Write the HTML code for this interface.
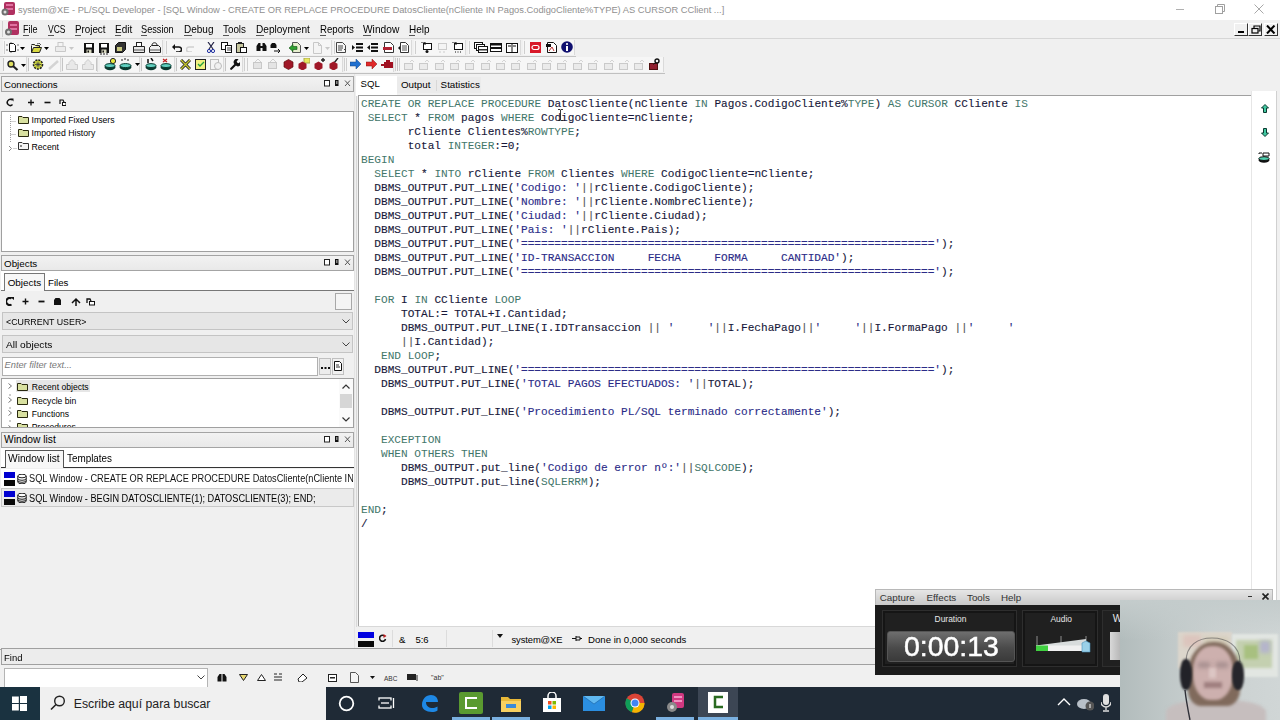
<!DOCTYPE html>
<html><head><meta charset="utf-8">
<style>
*{margin:0;padding:0;box-sizing:border-box}
html,body{width:1280px;height:720px;overflow:hidden;background:#f0f0f0;font-family:"Liberation Sans",sans-serif;font-size:10px;color:#000;position:relative}
.a{position:absolute}
.t{position:absolute;white-space:pre;line-height:1}
.code{position:absolute;left:361px;top:97px;font-family:"Liberation Mono",monospace;font-size:11.111px;line-height:14px;white-space:pre;color:#18183a;-webkit-text-stroke:0.12px}
.k{color:#42766a;-webkit-text-stroke:0}
.s{color:#2c2c88}
.o{color:#555}
</style></head><body>

<div class="a" style="left:0px;top:0px;width:1280px;height:20px;background:#fff"></div>
<svg class="a" style="left:1px;top:2px;" width="15" height="14" viewBox="0 0 15 14"><rect x="3" y="0" width="11" height="13" rx="2" fill="#b03060"/><rect x="5" y="2" width="7" height="2" fill="#e070a0"/><rect x="5" y="6" width="7" height="2" fill="#e070a0"/><circle cx="4" cy="10" r="3.5" fill="#707070"/><circle cx="4" cy="10" r="1.5" fill="#ddd"/></svg>
<div class="t" style="left:18px;top:5.71px;font-size:9.323px;color:#909090;font-family:'Liberation Sans';">system@XE - PL/SQL Developer - [SQL Window - CREATE OR REPLACE PROCEDURE DatosCliente(nCliente IN Pagos.CodigoCliente%TYPE) AS CURSOR CClient ...]</div>
<div class="a" style="left:1176px;top:9px;width:8px;height:1px;background:#b0b0b0"></div>
<svg class="a" style="left:1214px;top:4px;" width="11" height="11" viewBox="0 0 11 11"><rect x="1.5" y="2.5" width="7" height="7" fill="none" stroke="#a0a0a0"/><path d="M3.5 2.5V0.5h7v7h-2" fill="none" stroke="#a0a0a0"/></svg>
<svg class="a" style="left:1254px;top:4px;" width="10" height="10" viewBox="0 0 10 10"><path d="M0.5 0.5L9.5 9.5M9.5 0.5L0.5 9.5" stroke="#a8a8a8" stroke-width="1"/></svg>
<div class="a" style="left:0px;top:20px;width:1280px;height:18px;background:#f0f0f0"></div>
<div class="a" style="left:0px;top:38px;width:1280px;height:1px;background:#d6d6d6"></div>
<div class="a" style="left:2px;top:21px;width:1px;height:16px;background:#d0d0d0"></div>
<svg class="a" style="left:4px;top:21px;" width="15" height="15" viewBox="0 0 15 15"><rect x="4" y="0" width="11" height="14" rx="2" fill="#b03060"/><rect x="6" y="3" width="7" height="2" fill="#e070a0"/><rect x="6" y="7" width="7" height="2" fill="#e070a0"/><circle cx="4.5" cy="11" r="3.5" fill="#707070"/><circle cx="4.5" cy="11" r="1.5" fill="#ddd"/></svg>
<div class="t" style="left:23px;top:24.80px;font-size:10.400px;color:#000;font-family:'Liberation Sans';transform:scaleX(0.8712);transform-origin:0 0;">File</div>
<div class="a" style="left:23px;top:35px;width:6px;height:1px;background:#555"></div>
<div class="t" style="left:48px;top:24.80px;font-size:10.400px;color:#000;font-family:'Liberation Sans';transform:scaleX(0.8183);transform-origin:0 0;">VCS</div>
<div class="a" style="left:48px;top:35px;width:6px;height:1px;background:#555"></div>
<div class="t" style="left:75px;top:24.80px;font-size:10.400px;color:#000;font-family:'Liberation Sans';transform:scaleX(0.9423);transform-origin:0 0;">Project</div>
<div class="a" style="left:75px;top:35px;width:6px;height:1px;background:#555"></div>
<div class="t" style="left:115px;top:24.80px;font-size:10.400px;color:#000;font-family:'Liberation Sans';transform:scaleX(0.9597);transform-origin:0 0;">Edit</div>
<div class="a" style="left:115px;top:35px;width:6px;height:1px;background:#555"></div>
<div class="t" style="left:141.2px;top:24.80px;font-size:10.400px;color:#000;font-family:'Liberation Sans';transform:scaleX(0.8838);transform-origin:0 0;">Session</div>
<div class="a" style="left:141.2px;top:35px;width:6px;height:1px;background:#555"></div>
<div class="t" style="left:183.5px;top:24.80px;font-size:10.400px;color:#000;font-family:'Liberation Sans';transform:scaleX(0.9626);transform-origin:0 0;">Debug</div>
<div class="a" style="left:183.5px;top:35px;width:8px;height:1px;background:#555"></div>
<div class="t" style="left:223px;top:24.80px;font-size:10.400px;color:#000;font-family:'Liberation Sans';transform:scaleX(0.9473);transform-origin:0 0;">Tools</div>
<div class="a" style="left:223px;top:35px;width:6px;height:1px;background:#555"></div>
<div class="t" style="left:255.8px;top:24.80px;font-size:10.400px;color:#000;font-family:'Liberation Sans';transform:scaleX(0.9713);transform-origin:0 0;">Deployment</div>
<div class="a" style="left:255.8px;top:35px;width:8px;height:1px;background:#555"></div>
<div class="t" style="left:319.6px;top:24.80px;font-size:10.400px;color:#000;font-family:'Liberation Sans';transform:scaleX(0.9282);transform-origin:0 0;">Reports</div>
<div class="a" style="left:319.6px;top:35px;width:6px;height:1px;background:#555"></div>
<div class="t" style="left:362.7px;top:24.80px;font-size:10.400px;color:#000;font-family:'Liberation Sans';transform:scaleX(0.9813);transform-origin:0 0;">Window</div>
<div class="a" style="left:362.7px;top:35px;width:8px;height:1px;background:#555"></div>
<div class="t" style="left:409.1px;top:24.80px;font-size:10.400px;color:#000;font-family:'Liberation Sans';transform:scaleX(0.9584);transform-origin:0 0;">Help</div>
<div class="a" style="left:409.1px;top:35px;width:6px;height:1px;background:#555"></div>
<div class="a" style="left:1234px;top:23px;width:14px;height:13px;border-right:1px solid #333;border-bottom:1px solid #333;border-top:1px solid #fff;border-left:1px solid #fff"></div>
<div class="a" style="left:1248px;top:23px;width:14px;height:13px;border-right:1px solid #333;border-bottom:1px solid #333;border-top:1px solid #fff;border-left:1px solid #fff"></div>
<div class="a" style="left:1264px;top:23px;width:14px;height:13px;border-right:1px solid #333;border-bottom:1px solid #333;border-top:1px solid #fff;border-left:1px solid #fff"></div>
<div class="a" style="left:1238px;top:31px;width:6px;height:2px;background:#000"></div>
<svg class="a" style="left:1251px;top:25px;" width="10" height="9" viewBox="0 0 10 9"><rect x="1" y="3.5" width="6" height="4.5" fill="none" stroke="#000" stroke-width="1.2"/><path d="M3 3V1h6v5H7.5" fill="none" stroke="#000" stroke-width="1.2"/></svg>
<svg class="a" style="left:1266px;top:25px;" width="10" height="9" viewBox="0 0 10 9"><path d="M1 0.5L8.5 8.5M8.5 0.5L1 8.5" stroke="#000" stroke-width="2"/></svg>
<div class="a" style="left:0px;top:39px;width:1280px;height:17px;background:#f0f0f0"></div>
<div class="a" style="left:0px;top:56px;width:576px;height:1px;background:#c4c4c4"></div>
<div class="a" style="left:0px;top:57px;width:1280px;height:16px;background:#f0f0f0"></div>
<div class="a" style="left:0px;top:73px;width:665px;height:1px;background:#c0c0c0"></div>
<div class="a" style="left:3px;top:40px;width:160px;height:15px;background:#f6f6f6;border-right:1px solid #dadada"></div>
<div class="a" style="left:165px;top:40px;width:167px;height:15px;background:#f6f6f6;border-right:1px solid #dadada"></div>
<div class="a" style="left:333px;top:40px;width:79px;height:15px;background:#f6f6f6;border-right:1px solid #dadada"></div>
<div class="a" style="left:414px;top:40px;width:52px;height:15px;background:#f6f6f6;border-right:1px solid #dadada"></div>
<div class="a" style="left:468px;top:40px;width:53px;height:15px;background:#f6f6f6;border-right:1px solid #dadada"></div>
<div class="a" style="left:523px;top:40px;width:52px;height:15px;background:#f6f6f6;border-right:1px solid #dadada"></div>
<div class="a" style="left:3px;top:57px;width:24px;height:15px;background:#f6f6f6;border-right:1px solid #dadada"></div>
<div class="a" style="left:29px;top:57px;width:32px;height:15px;background:#f6f6f6;border-right:1px solid #dadada"></div>
<div class="a" style="left:63px;top:57px;width:35px;height:15px;background:#f6f6f6;border-right:1px solid #dadada"></div>
<div class="a" style="left:100px;top:57px;width:40px;height:15px;background:#f6f6f6;border-right:1px solid #dadada"></div>
<div class="a" style="left:142px;top:57px;width:33px;height:15px;background:#f6f6f6;border-right:1px solid #dadada"></div>
<div class="a" style="left:177px;top:57px;width:47px;height:15px;background:#f6f6f6;border-right:1px solid #dadada"></div>
<div class="a" style="left:226px;top:57px;width:17px;height:15px;background:#f6f6f6;border-right:1px solid #dadada"></div>
<div class="a" style="left:245px;top:57px;width:98px;height:15px;background:#f6f6f6;border-right:1px solid #dadada"></div>
<div class="a" style="left:345px;top:57px;width:49px;height:15px;background:#f6f6f6;border-right:1px solid #dadada"></div>
<div class="a" style="left:396px;top:57px;width:268px;height:15px;background:#f6f6f6;border-right:1px solid #dadada"></div>
<div class="a" style="left:4px;top:41px;width:1px;height:13px;background:#cfcfcf"></div>
<div class="a" style="left:166px;top:41px;width:1px;height:13px;background:#cfcfcf"></div>
<div class="a" style="left:334px;top:41px;width:1px;height:13px;background:#cfcfcf"></div>
<div class="a" style="left:415px;top:41px;width:1px;height:13px;background:#cfcfcf"></div>
<div class="a" style="left:469px;top:41px;width:1px;height:13px;background:#cfcfcf"></div>
<div class="a" style="left:524px;top:41px;width:1px;height:13px;background:#cfcfcf"></div>
<div class="a" style="left:3px;top:58px;width:1px;height:13px;background:#c4c4c4"></div>
<div class="a" style="left:28px;top:58px;width:1px;height:13px;background:#c4c4c4"></div>
<div class="a" style="left:62px;top:58px;width:1px;height:13px;background:#c4c4c4"></div>
<div class="a" style="left:96px;top:58px;width:1px;height:13px;background:#c4c4c4"></div>
<div class="a" style="left:141px;top:58px;width:1px;height:13px;background:#c4c4c4"></div>
<div class="a" style="left:176px;top:58px;width:1px;height:13px;background:#c4c4c4"></div>
<div class="a" style="left:225px;top:58px;width:1px;height:13px;background:#c4c4c4"></div>
<div class="a" style="left:397px;top:58px;width:1px;height:13px;background:#c4c4c4"></div>
<svg class="a" style="left:6px;top:42px;" width="13" height="11" viewBox="0 0 13 11"><path d="M3.5 1.5h4l2 2v6h-6z" fill="#fff" stroke="#111"/><path d="M0 3h2M0 8h2M11 3h2M11 8h2M5 0v1M5 10v1" stroke="#555" stroke-width="0.8"/></svg>
<svg class="a" style="left:20px;top:47px;" width="5" height="3" viewBox="0 0 5 3"><path d="M0 0h5L2.5 3z" fill="#000"/></svg>
<svg class="a" style="left:31px;top:43px;" width="11" height="10" viewBox="0 0 11 10"><path d="M0.5 1.5h3l1 1h4v2" fill="#c8c850" stroke="#222"/><path d="M0.5 9.5V2.5M0.5 9.5h8l2-5h-8z" fill="#d8d840" stroke="#222"/><path d="M6 1l2-1 2 2" fill="none" stroke="#333" stroke-width="0.8"/></svg>
<svg class="a" style="left:44px;top:47px;" width="5" height="3" viewBox="0 0 5 3"><path d="M0 0h5L2.5 3z" fill="#000"/></svg>
<svg class="a" style="left:55px;top:42px;" width="11" height="10" viewBox="0 0 11 10"><rect x="3" y="0.5" width="5" height="4" fill="#f4f4f4" stroke="#c8c8c8"/><path d="M0.5 9.5v-5h10v5z" fill="#ececec" stroke="#c8c8c8"/></svg>
<svg class="a" style="left:69px;top:47px;" width="5" height="3" viewBox="0 0 5 3"><path d="M0 0h5L2.5 3z" fill="#c8c8c8"/></svg>
<svg class="a" style="left:84px;top:43px;" width="10" height="10" viewBox="0 0 10 10"><rect x="0" y="0" width="10" height="10" fill="#111"/><rect x="2" y="1" width="6" height="3.5" fill="#fff"/><rect x="2.5" y="6.5" width="5" height="3.5" fill="#d8d8c0"/><rect x="3.5" y="7.5" width="1.5" height="2" fill="#111"/></svg>
<svg class="a" style="left:99px;top:43px;" width="10" height="10" viewBox="0 0 10 10"><rect x="0" y="0" width="10" height="10" fill="#111"/><rect x="2" y="1" width="6" height="3.5" fill="#fff"/><rect x="2.5" y="6.5" width="5" height="3.5" fill="#d8d8c0"/><rect x="3.5" y="7.5" width="1.5" height="2" fill="#111"/></svg>
<svg class="a" style="left:100px;top:53px;" width="9" height="2" viewBox="0 0 9 2"><path d="M0 1h2M3 1h2M6 1h2" stroke="#222"/></svg>
<svg class="a" style="left:115px;top:42px;" width="11" height="11" viewBox="0 0 11 11"><path d="M0.5 3.5l3-3h7v7l-3 3h-7z" fill="#333" stroke="#111"/><rect x="2" y="5" width="5" height="4" fill="#c8c880"/></svg>
<svg class="a" style="left:133px;top:42px;" width="12" height="11" viewBox="0 0 12 11"><rect x="3.5" y="0.5" width="5" height="4" fill="#fff" stroke="#222"/><path d="M0.5 10.5v-6h11v6z" fill="#e8e8e8" stroke="#222"/><path d="M1 8h10" stroke="#555"/></svg>
<svg class="a" style="left:149px;top:42px;" width="12" height="11" viewBox="0 0 12 11"><path d="M3 3c0-3 5-3 5 0" fill="none" stroke="#222"/><path d="M0.5 10.5v-5l2-2h7l2 2v5z" fill="#f0f0f0" stroke="#222"/><path d="M1 8h10" stroke="#555"/></svg>
<svg class="a" style="left:172px;top:44px;" width="10" height="8" viewBox="0 0 10 8"><path d="M2 3h5a2.5 2.5 0 0 1 0 5H4" fill="none" stroke="#111" stroke-width="1.5"/><path d="M0 3l3-3v6z" fill="#111"/></svg>
<svg class="a" style="left:186px;top:44px;" width="10" height="8" viewBox="0 0 10 8"><path d="M8 3H3a2.5 2.5 0 0 0 0 5h3" fill="none" stroke="#d0d0d0" stroke-width="1.5"/></svg>
<svg class="a" style="left:207px;top:42px;" width="8" height="11" viewBox="0 0 8 11"><path d="M1 0l5 7M7 0L2 7" stroke="#224" stroke-width="1.2"/><circle cx="2" cy="9" r="1.6" fill="none" stroke="#2030a0"/><circle cx="6" cy="9" r="1.6" fill="none" stroke="#2030a0"/></svg>
<svg class="a" style="left:221px;top:42px;" width="11" height="11" viewBox="0 0 11 11"><rect x="0.5" y="0.5" width="6" height="7" fill="#fff" stroke="#111"/><rect x="4.5" y="3.5" width="6" height="7" fill="#fff" stroke="#111"/><path d="M6 6h4M6 8h4" stroke="#444"/></svg>
<svg class="a" style="left:236px;top:42px;" width="11" height="11" viewBox="0 0 11 11"><rect x="0.5" y="1.5" width="7" height="9" fill="#c8c8a0" stroke="#222"/><rect x="4.5" y="5.5" width="6" height="5" fill="#fff" stroke="#111"/><rect x="2" y="0" width="4" height="2" fill="#222"/></svg>
<svg class="a" style="left:256px;top:42px;" width="11" height="10" viewBox="0 0 11 10"><path d="M0.5 9V4l2-3h2v8z M10.5 9V4l-2-3h-2v8z" fill="#111"/><rect x="4" y="4" width="3" height="2" fill="#111"/></svg>
<svg class="a" style="left:270px;top:42px;" width="12" height="11" viewBox="0 0 12 11"><path d="M0.5 6V3l1.5-2h1.5v5z M6.5 6V3L5 1H3.5v5z" fill="#111"/><path d="M4 9h6M8 7l2 2-2 2" stroke="#111" fill="none"/></svg>
<svg class="a" style="left:289px;top:42px;" width="12" height="11" viewBox="0 0 12 11"><path d="M3.5 0.5h5l3 3v7h-8z" fill="#e8f0d0" stroke="#555"/><path d="M0 6l4-3.5v2h4v3H4v2z" fill="#30a030" stroke="#105010" stroke-width="0.6"/></svg>
<svg class="a" style="left:304px;top:47px;" width="5" height="3" viewBox="0 0 5 3"><path d="M0 0h5L2.5 3z" fill="#000"/></svg>
<svg class="a" style="left:312px;top:42px;" width="11" height="12" viewBox="0 0 11 12"><path d="M1.5 0.5h5l3 3v8h-8z" fill="#f4f4f4" stroke="#c8c8c8" /><path d="M6.5 0.5v3h3" fill="none" stroke="#c8c8c8"/></svg>
<svg class="a" style="left:325px;top:47px;" width="5" height="3" viewBox="0 0 5 3"><path d="M0 0h5L2.5 3z" fill="#c8c8c8"/></svg>
<svg class="a" style="left:336px;top:42px;" width="11" height="11" viewBox="0 0 11 11"><path d="M0.5 0.5h6l3 3v7h-9z" fill="#f8f8f8" stroke="#444"/><path d="M2 4h5M2 6h5M2 8h4" stroke="#444"/><path d="M8 7l2 2-2 2" stroke="#444" fill="none"/></svg>
<svg class="a" style="left:352px;top:43px;" width="11" height="9" viewBox="0 0 11 9"><rect x="4" y="0" width="7" height="2" fill="#111"/><rect x="4" y="3.5" width="7" height="2" fill="#111"/><rect x="4" y="7" width="7" height="2" fill="#111"/><path d="M0 2l3 2.5L0 7z" fill="#111"/></svg>
<svg class="a" style="left:367px;top:43px;" width="11" height="9" viewBox="0 0 11 9"><rect x="4" y="0" width="7" height="2" fill="#111"/><rect x="4" y="3.5" width="7" height="2" fill="#111"/><rect x="4" y="7" width="7" height="2" fill="#111"/><path d="M3 2L0 4.5 3 7z" fill="#111"/></svg>
<svg class="a" style="left:383px;top:42px;" width="11" height="11" viewBox="0 0 11 11"><path d="M1.5 0.5h6l3 3v7h-9z" fill="#fff" stroke="#333"/><rect x="0" y="5" width="9" height="3" fill="#b02030"/></svg>
<svg class="a" style="left:398px;top:42px;" width="11" height="11" viewBox="0 0 11 11"><path d="M2.5 0.5h5l3 3v7h-8z" fill="#fff" stroke="#333"/><path d="M4 4h5M4 6h5M4 8h5" stroke="#555"/><path d="M0 6l2-2v4z" fill="#111"/></svg>
<svg class="a" style="left:421px;top:42px;" width="11" height="11" viewBox="0 0 11 11"><rect x="2.5" y="1.5" width="8" height="6" fill="#fff" stroke="#111"/><path d="M0 0h4v3" stroke="#111" fill="none"/><circle cx="6" cy="9.5" r="1.5" fill="#111"/></svg>
<svg class="a" style="left:436px;top:42px;" width="11" height="11" viewBox="0 0 11 11"><rect x="2.5" y="1.5" width="8" height="6" fill="#f4f4f4" stroke="#ccc"/><path d="M4 9v2M8 9v2" stroke="#ccc"/></svg>
<svg class="a" style="left:452px;top:42px;" width="11" height="11" viewBox="0 0 11 11"><rect x="2.5" y="1.5" width="8" height="6" fill="#fff" stroke="#111"/><path d="M0 0h4v3" stroke="#111" fill="none"/><path d="M3 10h1M5.5 10h1M8 10h1" stroke="#111"/></svg>
<svg class="a" style="left:474px;top:42px;" width="14" height="11" viewBox="0 0 14 11"><rect x="0.5" y="0.5" width="8" height="6" fill="#fff" stroke="#111"/><rect x="2.5" y="2.5" width="8" height="6" fill="#fff" stroke="#111"/><rect x="4.5" y="4.5" width="9" height="6" fill="#fff" stroke="#111"/><rect x="5" y="7" width="8" height="1.5" fill="#333"/></svg>
<svg class="a" style="left:490px;top:43px;" width="12" height="9" viewBox="0 0 12 9"><rect x="0.5" y="0.5" width="11" height="8" fill="#fff" stroke="#111"/><rect x="0.5" y="0.5" width="11" height="2" fill="#111"/><rect x="0.5" y="4" width="11" height="2" fill="#111"/></svg>
<svg class="a" style="left:506px;top:43px;" width="12" height="10" viewBox="0 0 12 10"><rect x="0.5" y="0.5" width="11" height="9" fill="#fff" stroke="#111"/><path d="M6 0v10" stroke="#111"/><path d="M2 3h3M7 3h3" stroke="#111"/></svg>
<svg class="a" style="left:530px;top:42px;" width="11" height="11" viewBox="0 0 11 11"><rect x="0" y="0" width="11" height="11" fill="#d81828"/><rect x="2" y="3.5" width="7" height="4" rx="2" fill="none" stroke="#fff" stroke-width="1.2"/></svg>
<svg class="a" style="left:546px;top:42px;" width="11" height="11" viewBox="0 0 11 11"><path d="M1.5 0.5h6l3 3v7h-9z" fill="#fff" stroke="#111"/><rect x="0" y="2" width="5" height="3" fill="#111"/><path d="M3 9l3-4 2 4" fill="none" stroke="#c03030"/></svg>
<svg class="a" style="left:561px;top:41px;" width="12" height="12" viewBox="0 0 12 12"><circle cx="6" cy="6" r="5.8" fill="#101070"/><rect x="5" y="5" width="2" height="5" fill="#fff"/><circle cx="6" cy="3" r="1.1" fill="#fff"/></svg>
<svg class="a" style="left:7px;top:60px;" width="12" height="11" viewBox="0 0 12 11"><circle cx="4" cy="4" r="3" fill="#e0e060" stroke="#222" stroke-width="1.4"/><path d="M6 6l4.5 4" stroke="#222" stroke-width="2.2"/></svg>
<svg class="a" style="left:21px;top:64px;" width="5" height="3" viewBox="0 0 5 3"><path d="M0 0h5L2.5 3z" fill="#000"/></svg>
<svg class="a" style="left:32px;top:59px;" width="12" height="11" viewBox="0 0 12 11"><circle cx="6" cy="5.5" r="4.5" fill="#d8e040" stroke="#222" stroke-dasharray="2 1" stroke-width="1.6"/><path d="M3 5.5h6M6 2.5v6M4 3.5l4 4M8 3.5l-4 4" stroke="#334" stroke-width="0.8"/></svg>
<svg class="a" style="left:48px;top:60px;" width="11" height="10" viewBox="0 0 11 10"><path d="M1 9l9-8" stroke="#d4d4d4" stroke-width="2.4"/></svg>
<svg class="a" style="left:66px;top:59px;" width="12" height="11" viewBox="0 0 12 11"><path d="M6 0.5l3 3v2h2.5v5h-11v-5H3v-2z" fill="#e8e8e8" stroke="#cccccc"/></svg>
<svg class="a" style="left:82px;top:59px;" width="12" height="11" viewBox="0 0 12 11"><path d="M6 0.5l3 3v2h2.5v5h-11v-5H3v-2z" fill="#e8e8e8" stroke="#cccccc"/></svg>
<svg class="a" style="left:104px;top:58px;" width="13" height="13" viewBox="0 0 13 13"><circle cx="9" cy="3" r="2.6" fill="#e8e840" stroke="#222"/><ellipse cx="6" cy="9" rx="5.5" ry="3.2" fill="#0a3a30"/><ellipse cx="6" cy="7.6" rx="5" ry="2" fill="#60d0c0" stroke="#0a3a30"/></svg>
<svg class="a" style="left:119px;top:58px;" width="13" height="13" viewBox="0 0 13 13"><path d="M2 2h2M5 1h2M8 2h2" stroke="#222"/><ellipse cx="6.5" cy="9" rx="6" ry="3.2" fill="#0a3a30"/><ellipse cx="6.5" cy="7.6" rx="5.5" ry="2" fill="#60d0c0" stroke="#0a3a30"/></svg>
<svg class="a" style="left:135px;top:63px;" width="5" height="3" viewBox="0 0 5 3"><path d="M0 0h5L2.5 3z" fill="#000"/></svg>
<svg class="a" style="left:145px;top:58px;" width="12" height="13" viewBox="0 0 12 13"><path d="M3 1v4M6 0l2 3" stroke="#111" stroke-width="1.5"/><ellipse cx="6" cy="9" rx="5.5" ry="3.2" fill="#0a3a30"/><ellipse cx="6" cy="7.6" rx="5" ry="2" fill="#60d0c0" stroke="#0a3a30"/></svg>
<svg class="a" style="left:160px;top:58px;" width="12" height="13" viewBox="0 0 12 13"><path d="M3 1l4 3M7 1L3 4" stroke="#c02020" stroke-width="1.3"/><ellipse cx="6" cy="9" rx="5.5" ry="3.2" fill="#0a3a30"/><ellipse cx="6" cy="7.6" rx="5" ry="2" fill="#60d0c0" stroke="#0a3a30"/></svg>
<svg class="a" style="left:180px;top:59px;" width="11" height="11" viewBox="0 0 11 11"><path d="M1 1l9 9M10 1L1 10" stroke="#222" stroke-width="3"/><path d="M1 1l9 9M10 1L1 10" stroke="#c8c830" stroke-width="1.4"/></svg>
<svg class="a" style="left:195px;top:59px;" width="11" height="11" viewBox="0 0 11 11"><rect x="0.5" y="0.5" width="10" height="10" fill="#f0f080" stroke="#222"/><path d="M3 5l2 2 4-4" stroke="#20a040" fill="none" stroke-width="1.3"/></svg>
<svg class="a" style="left:210px;top:59px;" width="12" height="11" viewBox="0 0 12 11"><rect x="0.5" y="0.5" width="8" height="10" fill="#f4f4f4" stroke="#bbb"/><circle cx="8" cy="7" r="3.5" fill="#f0f0f0" stroke="#bbb"/></svg>
<svg class="a" style="left:230px;top:59px;" width="10" height="11" viewBox="0 0 10 11"><path d="M1.2 9.8l4.8-4.8" stroke="#111" stroke-width="2.2" stroke-linecap="round"/><path d="M5 5.5a3 3 0 0 1 3.5-5l-1.8 1.8 0.6 1.4 1.4 0.6 1.8-1.8a3 3 0 0 1-5 3.5z" fill="#111"/></svg>
<div class="a" style="left:244px;top:58px;width:1px;height:13px;background:#cfcfcf"></div>
<div class="a" style="left:247px;top:58px;width:1px;height:13px;background:#cfcfcf"></div>
<svg class="a" style="left:252px;top:59px;" width="11" height="11" viewBox="0 0 11 11"><rect x="1.5" y="3.5" width="8" height="6" fill="#e4e4e4" stroke="#c8c8c8"/><path d="M3 3l3-3 3 3" fill="none" stroke="#d0d0d0"/></svg>
<svg class="a" style="left:267px;top:59px;" width="11" height="11" viewBox="0 0 11 11"><rect x="1.5" y="3.5" width="8" height="6" fill="#e4e4e4" stroke="#c8c8c8"/><path d="M3 3l3-3 3 3" fill="none" stroke="#d0d0d0"/></svg>
<svg class="a" style="left:283px;top:59px;" width="11" height="11" viewBox="0 0 11 11"><path d="M5.5 0.5l4.5 2.5v5l-4.5 2.5L1 8V3z" fill="#a01828" stroke="#601010" stroke-width="0.7"/></svg>
<svg class="a" style="left:298px;top:58px;" width="12" height="12" viewBox="0 0 12 12"><rect x="6" y="0" width="6" height="5" fill="#e8e860" stroke="#aa4"/><path d="M4.5 3.5l4 2.2v4.6l-4 2.2L0.5 10.3V5.7z" fill="#a01828"/></svg>
<svg class="a" style="left:314px;top:58px;" width="12" height="12" viewBox="0 0 12 12"><path d="M9 0v4M7 2h4" stroke="#222" stroke-width="1.4"/><path d="M4.5 3.5l4 2.2v4.6l-4 2.2L0.5 10.3V5.7z" fill="#a01828"/></svg>
<svg class="a" style="left:329px;top:58px;" width="11" height="12" viewBox="0 0 11 12"><path d="M9 0L5 5" stroke="#222" stroke-width="1.4"/><path d="M4.5 3.5l4 2.2v4.6l-4 2.2L0.5 10.3V5.7z" fill="#a01828"/></svg>
<div class="a" style="left:344px;top:58px;width:1px;height:13px;background:#cfcfcf"></div>
<div class="a" style="left:346px;top:58px;width:1px;height:13px;background:#cfcfcf"></div>
<svg class="a" style="left:350px;top:59px;" width="11" height="10" viewBox="0 0 11 10"><path d="M0 3h6V0l5 5-5 5V7H0z" fill="#2070d0" stroke="#104080" stroke-width="0.5"/></svg>
<svg class="a" style="left:366px;top:59px;" width="11" height="10" viewBox="0 0 11 10"><path d="M0 3h6V0l5 5-5 5V7H0z" fill="#e02828" stroke="#801010" stroke-width="0.5"/></svg>
<svg class="a" style="left:381px;top:59px;" width="12" height="10" viewBox="0 0 12 10"><rect x="3" y="3" width="9" height="6" fill="#a01020"/><rect x="0" y="5" width="4" height="2" fill="#a01020"/><rect x="5" y="1" width="4" height="2" fill="#a01020"/></svg>
<div class="a" style="left:395px;top:58px;width:1px;height:13px;background:#cfcfcf"></div>
<div class="a" style="left:399px;top:58px;width:1px;height:13px;background:#cfcfcf"></div>
<svg class="a" style="left:403px;top:59px;" width="12" height="11" viewBox="0 0 12 11"><rect x="1.5" y="4.5" width="8" height="6" fill="#ebebeb" stroke="#cacaca"/><path d="M7 3l2-2 2 2" fill="none" stroke="#d4d4d4"/></svg>
<svg class="a" style="left:418px;top:59px;" width="12" height="11" viewBox="0 0 12 11"><rect x="1.5" y="4.5" width="8" height="6" fill="#ebebeb" stroke="#cacaca"/><path d="M7 3l2-2 2 2" fill="none" stroke="#d4d4d4"/></svg>
<svg class="a" style="left:434px;top:59px;" width="12" height="11" viewBox="0 0 12 11"><rect x="1.5" y="4.5" width="8" height="6" fill="#ebebeb" stroke="#cacaca"/><path d="M7 3l2-2 2 2" fill="none" stroke="#d4d4d4"/></svg>
<svg class="a" style="left:449px;top:59px;" width="12" height="11" viewBox="0 0 12 11"><rect x="1.5" y="4.5" width="8" height="6" fill="#ebebeb" stroke="#cacaca"/><path d="M7 3l2-2 2 2" fill="none" stroke="#d4d4d4"/></svg>
<svg class="a" style="left:464px;top:59px;" width="12" height="11" viewBox="0 0 12 11"><rect x="1.5" y="4.5" width="8" height="6" fill="#ebebeb" stroke="#cacaca"/><path d="M7 3l2-2 2 2" fill="none" stroke="#d4d4d4"/></svg>
<svg class="a" style="left:480px;top:59px;" width="12" height="11" viewBox="0 0 12 11"><rect x="1.5" y="4.5" width="8" height="6" fill="#ebebeb" stroke="#cacaca"/><path d="M7 3l2-2 2 2" fill="none" stroke="#d4d4d4"/></svg>
<svg class="a" style="left:495px;top:59px;" width="12" height="11" viewBox="0 0 12 11"><rect x="1.5" y="4.5" width="8" height="6" fill="#ebebeb" stroke="#cacaca"/><path d="M7 3l2-2 2 2" fill="none" stroke="#d4d4d4"/></svg>
<svg class="a" style="left:510px;top:59px;" width="12" height="11" viewBox="0 0 12 11"><rect x="1.5" y="4.5" width="8" height="6" fill="#ebebeb" stroke="#cacaca"/><path d="M7 3l2-2 2 2" fill="none" stroke="#d4d4d4"/></svg>
<svg class="a" style="left:526px;top:59px;" width="12" height="11" viewBox="0 0 12 11"><rect x="1.5" y="4.5" width="8" height="6" fill="#ebebeb" stroke="#cacaca"/><path d="M7 3l2-2 2 2" fill="none" stroke="#d4d4d4"/></svg>
<svg class="a" style="left:541px;top:59px;" width="12" height="11" viewBox="0 0 12 11"><rect x="1.5" y="4.5" width="8" height="6" fill="#ebebeb" stroke="#cacaca"/><path d="M7 3l2-2 2 2" fill="none" stroke="#d4d4d4"/></svg>
<svg class="a" style="left:556px;top:59px;" width="12" height="11" viewBox="0 0 12 11"><rect x="1.5" y="4.5" width="8" height="6" fill="#ebebeb" stroke="#cacaca"/><path d="M7 3l2-2 2 2" fill="none" stroke="#d4d4d4"/></svg>
<svg class="a" style="left:572px;top:59px;" width="12" height="11" viewBox="0 0 12 11"><rect x="1.5" y="4.5" width="8" height="6" fill="#ebebeb" stroke="#cacaca"/><path d="M7 3l2-2 2 2" fill="none" stroke="#d4d4d4"/></svg>
<svg class="a" style="left:587px;top:59px;" width="12" height="11" viewBox="0 0 12 11"><rect x="1.5" y="4.5" width="8" height="6" fill="#ebebeb" stroke="#cacaca"/><path d="M7 3l2-2 2 2" fill="none" stroke="#d4d4d4"/></svg>
<svg class="a" style="left:603px;top:59px;" width="12" height="11" viewBox="0 0 12 11"><rect x="1.5" y="4.5" width="8" height="6" fill="#ebebeb" stroke="#cacaca"/><path d="M7 3l2-2 2 2" fill="none" stroke="#d4d4d4"/></svg>
<svg class="a" style="left:618px;top:59px;" width="12" height="11" viewBox="0 0 12 11"><rect x="1.5" y="4.5" width="8" height="6" fill="#ebebeb" stroke="#cacaca"/><path d="M7 3l2-2 2 2" fill="none" stroke="#d4d4d4"/></svg>
<svg class="a" style="left:633px;top:59px;" width="12" height="11" viewBox="0 0 12 11"><rect x="1.5" y="4.5" width="8" height="6" fill="#ebebeb" stroke="#cacaca"/><path d="M7 3l2-2 2 2" fill="none" stroke="#d4d4d4"/></svg>
<svg class="a" style="left:649px;top:58px;" width="11" height="12" viewBox="0 0 11 12"><rect x="0.5" y="5.5" width="8" height="6" fill="#902030" stroke="#501010"/><circle cx="8" cy="3" r="2" fill="none" stroke="#111" stroke-width="1.4"/><path d="M6.5 4.5l-2 2" stroke="#111"/></svg>
<div class="a" style="left:1px;top:76px;width:353px;height:16px;background:linear-gradient(#f2f2f2,#e9e9e9);border:1px solid #a4a4a4"></div>
<div class="t" style="left:4px;top:79.81px;font-size:9.678px;color:#000;font-family:'Liberation Sans';">Connections</div>
<svg class="a" style="left:323px;top:80px;" width="30" height="7" viewBox="0 0 30 7"><rect x="1.5" y="0.5" width="5" height="5.5" fill="#fff" stroke="#222"/><rect x="12" y="0" width="3.5" height="6" fill="#111"/><rect x="13" y="1" width="1.5" height="3" fill="#888"/><path d="M22 0.5l5 5.5M27 0.5l-5 5.5" stroke="#555"/></svg>
<svg class="a" style="left:6px;top:98px;" width="60" height="9" viewBox="0 0 60 9"><path d="M6 2a3 3 0 1 0 0.5 4.5" fill="none" stroke="#111" stroke-width="1.5"/><path d="M4.5 0.5h3v3z" fill="#111"/><path d="M25 1.5v6M22 4.5h6" stroke="#111" stroke-width="1.3"/><path d="M38.5 4.5h6" stroke="#111" stroke-width="1.6"/><path d="M54 6V2h3l1 2" stroke="#111" fill="none" stroke-width="1.2"/><rect x="56.5" y="4.5" width="3.5" height="3" fill="#fff" stroke="#111"/></svg>
<div class="a" style="left:1px;top:111px;width:353px;height:141px;background:#fff;border:1px solid #a0a0a0"></div>
<svg class="a" style="left:9px;top:115px;" width="10" height="40" viewBox="0 0 10 40"><path d="M1.5 0v27" stroke="#a0a0a0" stroke-dasharray="1 1"/><path d="M1.5 6.5h6M1.5 19.5h6M4.5 33.5h3" stroke="#a0a0a0" stroke-dasharray="1 1"/><path d="M0 31l2.5 2.5L0 36" fill="none" stroke="#888"/></svg>
<svg class="a" style="left:18px;top:115px;" width="11" height="9" viewBox="0 0 11 9"><path d="M0.5 1.5h3.5l1 1h5.5v6h-10z" fill="#d8e0a0" stroke="#2a2a10"/><rect x="1" y="3.5" width="9" height="4.5" fill="#d8e0a0"/></svg>
<div class="t" style="left:31.5px;top:115.94px;font-size:8.700px;color:#000;font-family:'Liberation Sans';">Imported Fixed Users</div>
<svg class="a" style="left:18px;top:128px;" width="11" height="9" viewBox="0 0 11 9"><path d="M0.5 1.5h3.5l1 1h5.5v6h-10z" fill="#d8e0a0" stroke="#2a2a10"/><rect x="1" y="3.5" width="9" height="4.5" fill="#d8e0a0"/></svg>
<div class="t" style="left:31.5px;top:129.24px;font-size:8.700px;color:#000;font-family:'Liberation Sans';">Imported History</div>
<svg class="a" style="left:18px;top:141px;" width="11" height="9" viewBox="0 0 11 9"><path d="M0.5 1.5h3.5l1 1h5.5v6h-10z" fill="#f4f4f4" stroke="#333"/><rect x="2" y="4" width="2" height="2" fill="#888"/></svg>
<div class="t" style="left:31.5px;top:142.54px;font-size:8.700px;color:#000;font-family:'Liberation Sans';">Recent</div>
<div class="a" style="left:1px;top:255px;width:353px;height:16px;background:linear-gradient(#f2f2f2,#e9e9e9);border:1px solid #a4a4a4"></div>
<div class="t" style="left:4px;top:258.69px;font-size:9.823px;color:#000;font-family:'Liberation Sans';">Objects</div>
<svg class="a" style="left:323px;top:259px;" width="30" height="7" viewBox="0 0 30 7"><rect x="1.5" y="0.5" width="5" height="5.5" fill="#fff" stroke="#222"/><rect x="12" y="0" width="3.5" height="6" fill="#111"/><rect x="13" y="1" width="1.5" height="3" fill="#888"/><path d="M22 0.5l5 5.5M27 0.5l-5 5.5" stroke="#555"/></svg>
<div class="a" style="left:1px;top:271px;width:353px;height:20px;background:#fff"></div>
<div class="a" style="left:45px;top:290px;width:309px;height:1px;background:#777"></div>
<div class="a" style="left:4px;top:273px;width:41px;height:18px;background:#f7f7f7;border:1px solid #777;border-bottom:none"></div>
<div class="a" style="left:1px;top:290px;width:4px;height:1px;background:#777"></div>
<div class="t" style="left:7.7px;top:278.14px;font-size:9.882px;color:#000;font-family:'Liberation Sans';">Objects</div>
<div class="t" style="left:48px;top:278.29px;font-size:9.700px;color:#000;font-family:'Liberation Sans';">Files</div>
<div class="a" style="left:1px;top:291px;width:353px;height:20px;background:#f0f0f0"></div>
<svg class="a" style="left:6px;top:297px;" width="92" height="9" viewBox="0 0 92 9"><path d="M5.5 1.5a3.5 3.5 0 1 0 0 6" fill="none" stroke="#111" stroke-width="2"/><path d="M4 0h4v3" fill="#111"/><path d="M16.5 4.5h6M19.5 1.5v6" stroke="#111" stroke-width="1.4"/><path d="M32.5 4.5h6" stroke="#111" stroke-width="1.8"/><path d="M48 8V3l1.5-2h2v7zM55 8V3l-1.5-2h-2v7z" fill="#111"/><path d="M66 6l4-4 4 4M70 2v7" stroke="#111" fill="none" stroke-width="1.5"/><path d="M81 6V2h3l1 2" stroke="#111" fill="none" stroke-width="1.3"/><rect x="83.5" y="4.5" width="5" height="3.5" fill="#fff" stroke="#111"/></svg>
<div class="a" style="left:335px;top:293px;width:17px;height:17px;background:#f4f4f4;border:1px solid #a8a8a8"></div>
<div class="a" style="left:2px;top:312px;width:351px;height:18px;background:#e6e6e6;border:1px solid #c4c4c4"></div>
<div class="t" style="left:5.6px;top:316.70px;font-size:9.800px;color:#000;font-family:'Liberation Sans';transform:scaleX(0.9032);transform-origin:0 0;">&lt;CURRENT USER&gt;</div>
<svg class="a" style="left:342px;top:319px;" width="8" height="5" viewBox="0 0 8 5"><path d="M0.5 0.5l3.5 3.5 3.5-3.5" fill="none" stroke="#444"/></svg>
<div class="a" style="left:2px;top:335px;width:351px;height:18px;background:#e6e6e6;border:1px solid #c4c4c4"></div>
<div class="t" style="left:5.6px;top:339.70px;font-size:9.800px;color:#000;font-family:'Liberation Sans';transform:scaleX(1.0366);transform-origin:0 0;">All objects</div>
<svg class="a" style="left:342px;top:342px;" width="8" height="5" viewBox="0 0 8 5"><path d="M0.5 0.5l3.5 3.5 3.5-3.5" fill="none" stroke="#444"/></svg>
<div class="a" style="left:2px;top:357px;width:316px;height:19px;background:#fff;border:1px solid #b0b0b0"></div>
<div class="t" style="left:4.6px;top:361.17px;font-size:9.244px;color:#777;font-family:'Liberation Sans';font-style:italic;">Enter filter text...</div>
<div class="a" style="left:319px;top:358px;width:12px;height:17px;background:#ececec;border:1px solid #c0c0c0"></div>
<svg class="a" style="left:321px;top:367px;" width="9" height="3" viewBox="0 0 9 3"><rect x="0" y="0" width="2" height="2" fill="#111"/><rect x="3.5" y="0" width="2" height="2" fill="#111"/><rect x="7" y="0" width="2" height="2" fill="#111"/></svg>
<div class="a" style="left:332px;top:358px;width:12px;height:17px;background:#f0f0f0;border:1px solid #c0c0c0"></div>
<svg class="a" style="left:334px;top:361px;" width="8" height="10" viewBox="0 0 8 10"><path d="M0.5 0.5h5l2 2v7h-7z" fill="#fff" stroke="#111"/><path d="M2 4h3M2 6h4" stroke="#333"/></svg>
<div class="a" style="left:1px;top:378px;width:353px;height:50px;background:#fff;border:1px solid #a0a0a0;overflow:hidden"></div>
<div class="a" style="left:339px;top:379px;width:14px;height:48px;background:#fafafa"></div>
<svg class="a" style="left:342px;top:384px;" width="8" height="5" viewBox="0 0 8 5"><path d="M0.5 4.5l3.5-3.5 3.5 3.5" fill="none" stroke="#333" stroke-width="1.2"/></svg>
<div class="a" style="left:340px;top:394px;width:12px;height:14px;background:#d6d6d6"></div>
<svg class="a" style="left:342px;top:417px;" width="8" height="5" viewBox="0 0 8 5"><path d="M0.5 0.5l3.5 3.5 3.5-3.5" fill="none" stroke="#333" stroke-width="1.2"/></svg>
<div class="a" style="left:16px;top:380px;width:74px;height:12px;background:#e6e6e6"></div>
<svg class="a" style="left:8px;top:383px;" width="5" height="6" viewBox="0 0 5 6"><path d="M0.5 0.5l3 2.5-3 2.5" fill="none" stroke="#777"/></svg>
<svg class="a" style="left:17px;top:382px;" width="11" height="9" viewBox="0 0 11 9"><path d="M0.5 1.5h3.5l1 1h5.5v6h-10z" fill="#d8e0a0" stroke="#2a2a10"/><rect x="1" y="3.5" width="9" height="4.5" fill="#d8e0a0"/></svg>
<div class="t" style="left:31.8px;top:383.12px;font-size:8.600px;color:#000;font-family:'Liberation Sans';">Recent objects</div>
<svg class="a" style="left:8px;top:397px;" width="5" height="6" viewBox="0 0 5 6"><path d="M0.5 0.5l3 2.5-3 2.5" fill="none" stroke="#777"/></svg>
<svg class="a" style="left:17px;top:396px;" width="11" height="9" viewBox="0 0 11 9"><path d="M0.5 1.5h3.5l1 1h5.5v6h-10z" fill="#d8e0a0" stroke="#2a2a10"/><rect x="1" y="3.5" width="9" height="4.5" fill="#d8e0a0"/></svg>
<div class="t" style="left:31.8px;top:396.52px;font-size:8.600px;color:#000;font-family:'Liberation Sans';">Recycle bin</div>
<svg class="a" style="left:8px;top:410px;" width="5" height="6" viewBox="0 0 5 6"><path d="M0.5 0.5l3 2.5-3 2.5" fill="none" stroke="#777"/></svg>
<svg class="a" style="left:17px;top:409px;" width="11" height="9" viewBox="0 0 11 9"><path d="M0.5 1.5h3.5l1 1h5.5v6h-10z" fill="#d8e0a0" stroke="#2a2a10"/><rect x="1" y="3.5" width="9" height="4.5" fill="#d8e0a0"/></svg>
<div class="t" style="left:31.8px;top:409.92px;font-size:8.600px;color:#000;font-family:'Liberation Sans';">Functions</div>
<div class="a" style="left:1px;top:420px;width:335px;height:7px;overflow:hidden">
<svg class="a" style="left:7px;top:5px" width="5" height="6" viewBox="0 0 5 6"><path d="M0.5 0.5l3 2.5-3 2.5" fill="none" stroke="#777"/></svg>
<svg class="a" style="left:16px;top:2px" width="11" height="9" viewBox="0 0 11 9"><path d="M0.5 1.5h3.5l1 1h5.5v6h-10z" fill="#d8e0a0" stroke="#2a2a10"/></svg>
<div class="t" style="left:30.8px;top:3.2px;font-size:8.6px;color:#000">Procedures</div>
</div>
<svg class="a" style="left:9px;top:392px;" width="2" height="30" viewBox="0 0 2 30"><path d="M1 2v2M1 15v2M1 28v2" stroke="#999"/></svg>
<div class="a" style="left:1px;top:432px;width:353px;height:16px;background:linear-gradient(#f2f2f2,#e9e9e9);border:1px solid #a4a4a4"></div>
<div class="t" style="left:4px;top:435.33px;font-size:10.244px;color:#000;font-family:'Liberation Sans';">Window list</div>
<svg class="a" style="left:323px;top:436px;" width="30" height="7" viewBox="0 0 30 7"><rect x="1.5" y="0.5" width="5" height="5.5" fill="#fff" stroke="#222"/><rect x="12" y="0" width="3.5" height="6" fill="#111"/><rect x="13" y="1" width="1.5" height="3" fill="#888"/><path d="M22 0.5l5 5.5M27 0.5l-5 5.5" stroke="#555"/></svg>
<div class="a" style="left:1px;top:448px;width:353px;height:20px;background:#fff"></div>
<div class="a" style="left:63px;top:467px;width:291px;height:1px;background:#333"></div>
<div class="a" style="left:4.6px;top:450px;width:59px;height:18px;background:#f7f7f7;border:1px solid #555;border-bottom:none"></div>
<div class="a" style="left:1px;top:467px;width:4px;height:1px;background:#333"></div>
<div class="t" style="left:8.2px;top:454.24px;font-size:10.000px;color:#000;font-family:'Liberation Sans';transform:scaleX(1.0204);transform-origin:0 0;">Window list</div>
<div class="t" style="left:67.2px;top:454.24px;font-size:10.000px;color:#000;font-family:'Liberation Sans';transform:scaleX(0.9873);transform-origin:0 0;">Templates</div>
<div class="a" style="left:1px;top:469px;width:353px;height:19px;background:#fff"></div>
<div class="a" style="left:1px;top:488px;width:353px;height:19px;background:#ebebeb;border:1px solid #c8c8c8"></div>
<div class="a" style="left:4px;top:471.5px;width:11px;height:6px;background:#0000d0"></div>
<div class="a" style="left:4px;top:479.5px;width:11px;height:6px;background:#0a0a0a"></div>
<svg class="a" style="left:17px;top:473.5px;" width="10" height="10" viewBox="0 0 10 10"><ellipse cx="5" cy="2" rx="4.2" ry="1.8" fill="#fff" stroke="#222"/><path d="M0.8 2v6a4.2 1.8 0 0 0 8.4 0V2M0.8 4.5a4.2 1.8 0 0 0 8.4 0M0.8 6.5a4.2 1.8 0 0 0 8.4 0" fill="none" stroke="#222"/></svg>
<div class="a" style="left:28px;top:470px;width:325px;height:17px;overflow:hidden">
<div class="t" style="left:0.5px;top:4.3px;font-size:10px;color:#111;transform:scaleX(0.919);transform-origin:0 0">SQL Window - CREATE OR REPLACE PROCEDURE DatosCliente(nCliente IN Pagos.CodigoCliente%TYPE)</div>
</div>
<div class="a" style="left:4px;top:490.8px;width:11px;height:6px;background:#0000d0"></div>
<div class="a" style="left:4px;top:498.8px;width:11px;height:6px;background:#0a0a0a"></div>
<svg class="a" style="left:17px;top:492.8px;" width="10" height="10" viewBox="0 0 10 10"><ellipse cx="5" cy="2" rx="4.2" ry="1.8" fill="#fff" stroke="#222"/><path d="M0.8 2v6a4.2 1.8 0 0 0 8.4 0V2M0.8 4.5a4.2 1.8 0 0 0 8.4 0M0.8 6.5a4.2 1.8 0 0 0 8.4 0" fill="none" stroke="#222"/></svg>
<div class="t" style="left:28.5px;top:493.54px;font-size:10.000px;color:#000;font-family:'Liberation Sans';transform:scaleX(0.9191);transform-origin:0 0;">SQL Window - BEGIN DATOSCLIENTE(1); DATOSCLIENTE(3); END;</div>
<div class="a" style="left:354px;top:74px;width:1px;height:576px;background:#e4e4e4"></div>
<div class="a" style="left:355px;top:74px;width:925px;height:576px;background:#f0f0f0"></div>
<div class="a" style="left:354px;top:74px;width:1px;height:576px;background:#e4e4e4"></div>
<div class="a" style="left:356px;top:96px;width:1px;height:532px;background:#d8d8d8"></div>
<div class="a" style="left:356px;top:76px;width:41px;height:20px;background:#fff"></div>
<div class="a" style="left:397px;top:77px;width:84px;height:16px;background:#ebebeb"></div>
<div class="a" style="left:436px;top:80px;width:1px;height:11px;background:#d8d8d8"></div>
<div class="t" style="left:360.6px;top:79.37px;font-size:9.600px;color:#000;font-family:'Liberation Sans';">SQL</div>
<div class="t" style="left:401px;top:79.70px;font-size:9.800px;color:#000;font-family:'Liberation Sans';">Output</div>
<div class="t" style="left:440.6px;top:79.70px;font-size:9.800px;color:#000;font-family:'Liberation Sans';">Statistics</div>
<div class="a" style="left:358px;top:95px;width:893px;height:532px;background:#fff;border-left:1px solid #a0a0a0;border-top:1px solid #a0a0a0"></div>
<div class="a" style="left:1251px;top:91px;width:26px;height:536px;background:#fff;border-left:1px solid #e6e6e6;border-right:1px solid #d0d0d0"></div>
<svg class="a" style="left:1261px;top:104px;" width="8" height="9" viewBox="0 0 8 9"><path d="M4 0.5L7.5 4H5.5v4.5h-3V4H0.5z" fill="#40c8a0" stroke="#0a3a30"/></svg>
<svg class="a" style="left:1261px;top:128px;" width="8" height="9" viewBox="0 0 8 9"><path d="M4 8.5L7.5 5H5.5V0.5h-3V5H0.5z" fill="#40c8a0" stroke="#0a3a30"/></svg>
<svg class="a" style="left:1258px;top:152px;" width="12" height="11" viewBox="0 0 12 11"><path d="M1 2V1h3M5 1h6v3H5z" fill="#fff" stroke="#111"/><ellipse cx="6" cy="8" rx="5.5" ry="2.8" fill="#111"/><ellipse cx="6" cy="6.6" rx="5.2" ry="1.9" fill="#50d0b0" stroke="#111"/></svg>
<div class="code"><span class="k">CREATE</span> <span class="k">OR</span> <span class="k">REPLACE</span> <span class="k">PROCEDURE</span> DatosCliente(nCliente <span class="k">IN</span> Pagos.CodigoCliente%<span class="k">TYPE</span>) <span class="k">AS</span> <span class="k">CURSOR</span> CCliente <span class="k">IS</span>
 <span class="k">SELECT</span> * <span class="k">FROM</span> pagos <span class="k">WHERE</span> CodigoCliente=nCliente;
       rCliente Clientes%<span class="k">ROWTYPE</span>;
       total <span class="k">INTEGER</span>:=0;
<span class="k">BEGIN</span>
  <span class="k">SELECT</span> * <span class="k">INTO</span> rCliente <span class="k">FROM</span> Clientes <span class="k">WHERE</span> CodigoCliente=nCliente;
  DBMS_OUTPUT.PUT_LINE(<span class="s">&#x27;Codigo: &#x27;</span><span class="o">||</span>rCliente.CodigoCliente);
  DBMS_OUTPUT.PUT_LINE(<span class="s">&#x27;Nombre: &#x27;</span><span class="o">||</span>rCliente.NombreCliente);
  DBMS_OUTPUT.PUT_LINE(<span class="s">&#x27;Ciudad: &#x27;</span><span class="o">||</span>rCliente.Ciudad);
  DBMS_OUTPUT.PUT_LINE(<span class="s">&#x27;Pais: &#x27;</span><span class="o">||</span>rCliente.Pais);
  DBMS_OUTPUT.PUT_LINE(<span class="s">&#x27;==============================================================&#x27;</span>);
  DBMS_OUTPUT.PUT_LINE(<span class="s">&#x27;ID-TRANSACCION     FECHA     FORMA     CANTIDAD&#x27;</span>);
  DBMS_OUTPUT.PUT_LINE(<span class="s">&#x27;==============================================================&#x27;</span>);

  <span class="k">FOR</span> I <span class="k">IN</span> CCliente <span class="k">LOOP</span>
      TOTAL:= TOTAL+I.Cantidad;
      DBMS_OUTPUT.PUT_LINE(I.IDTransaccion <span class="o">||</span> <span class="s">&#x27;     &#x27;</span><span class="o">||</span>I.FechaPago<span class="o">||</span><span class="s">&#x27;     &#x27;</span><span class="o">||</span>I.FormaPago <span class="o">||</span><span class="s">&#x27;     &#x27;</span>
      <span class="o">||</span>I.Cantidad);
   <span class="k">END</span> <span class="k">LOOP</span>;
  DBMS_OUTPUT.PUT_LINE(<span class="s">&#x27;==============================================================&#x27;</span>);
   DBMS_OUTPUT.PUT_LINE(<span class="s">&#x27;TOTAL PAGOS EFECTUADOS: &#x27;</span><span class="o">||</span>TOTAL);

   DBMS_OUTPUT.PUT_LINE(<span class="s">&#x27;Procedimiento PL/SQL terminado correctamente&#x27;</span>);

   <span class="k">EXCEPTION</span>
   <span class="k">WHEN</span> <span class="k">OTHERS</span> <span class="k">THEN</span>
      DBMS_OUTPUT.put_line(<span class="s">&#x27;Codigo de error nº:&#x27;</span><span class="o">||</span><span class="k">SQLCODE</span>);
      DBMS_OUTPUT.put_line(<span class="k">SQLERRM</span>);

<span class="k">END</span>;
/</div>
<div class="a" style="left:355px;top:627px;width:925px;height:22px;background:#f0f0f0"></div>
<div class="a" style="left:358px;top:626px;width:893px;height:1px;background:#d8d8d8"></div>
<div class="a" style="left:357.5px;top:632px;width:16.5px;height:6px;background:#0000e0"></div>
<div class="a" style="left:357.5px;top:641px;width:16.5px;height:6px;background:#080808"></div>
<svg class="a" style="left:379px;top:634px;" width="8" height="8" viewBox="0 0 8 8"><path d="M6 2.5A3 3 0 1 0 6.5 5" fill="none" stroke="#111" stroke-width="1.6"/><path d="M4.5 0l3 2-3 2z" fill="#c02020"/></svg>
<div class="a" style="left:392px;top:630px;width:1px;height:17px;background:#dcdcdc"></div>
<div class="t" style="left:399px;top:635.17px;font-size:9.600px;color:#000;font-family:'Liberation Sans';">&amp;</div>
<div class="t" style="left:415.4px;top:635.26px;font-size:9.495px;color:#000;font-family:'Liberation Sans';">5:6</div>
<div class="a" style="left:445.5px;top:630px;width:1px;height:17px;background:#dcdcdc"></div>
<div class="a" style="left:491.9px;top:630px;width:1px;height:17px;background:#dcdcdc"></div>
<svg class="a" style="left:497px;top:634px;" width="6" height="4" viewBox="0 0 6 4"><path d="M0 0h6L3 4z" fill="#111"/></svg>
<div class="t" style="left:511.5px;top:635.34px;font-size:9.400px;color:#000;font-family:'Liberation Sans';letter-spacing:-0.1px">system@XE</div>
<svg class="a" style="left:572px;top:635px;" width="10" height="7" viewBox="0 0 10 7"><path d="M0 3.5h4M4 1v5M4 2h4v3H4M8 3.5h2" stroke="#111" fill="none"/></svg>
<div class="t" style="left:588px;top:635.15px;font-size:9.629px;color:#000;font-family:'Liberation Sans';">Done in 0,000 seconds</div>
<div class="a" style="left:0px;top:649px;width:1280px;height:1px;background:#a8a8a8"></div>
<svg class="a" style="left:557px;top:109px;" width="7" height="13" viewBox="0 0 7 13"><path d="M1 0.5h2l0.5 0.5 0.5-0.5h2M3.5 1v10M1 11.5h2l0.5-0.5 0.5 0.5h2" fill="none" stroke="#222" stroke-width="0.9"/></svg>
<div class="a" style="left:0px;top:650px;width:1280px;height:37px;background:#f0f0f0"></div>
<div class="a" style="left:1px;top:648px;width:1279px;height:17px;background:#ececec;border:1px solid #a0a0a0"></div>
<div class="t" style="left:4.1px;top:652.70px;font-size:9.800px;color:#000;font-family:'Liberation Sans';transform:scaleX(0.9652);transform-origin:0 0;">Find</div>
<div class="a" style="left:4px;top:668px;width:204px;height:19px;background:#fff;border:1px solid #b4b4b4;border-bottom:none"></div>
<svg class="a" style="left:197px;top:675px;" width="8" height="5" viewBox="0 0 8 5"><path d="M0.5 0.5l3.5 3.5 3.5-3.5" fill="none" stroke="#444"/></svg>
<svg class="a" style="left:217px;top:673px;" width="10" height="9" viewBox="0 0 10 9"><path d="M0.5 8.5V4l2-3h2v7.5zM9.5 8.5V4l-2-3h-2v7.5z" fill="#111"/></svg>
<svg class="a" style="left:239px;top:674px;" width="9" height="7" viewBox="0 0 9 7"><path d="M0.5 0.5h8L4.5 6.5z" fill="#e8d870" stroke="#222"/></svg>
<svg class="a" style="left:257px;top:674px;" width="9" height="7" viewBox="0 0 9 7"><path d="M0.5 6.5h8L4.5 0.5z" fill="#fff" stroke="#222"/></svg>
<svg class="a" style="left:274px;top:673px;" width="9" height="9" viewBox="0 0 9 9"><path d="M0 1h3M5 1h3M0 4h8M0 7h8" stroke="#222"/></svg>
<svg class="a" style="left:297px;top:673px;" width="11" height="9" viewBox="0 0 11 9"><path d="M1 6l5-5 4 4-5 4H2z" fill="#fff" stroke="#222"/></svg>
<svg class="a" style="left:328px;top:674px;" width="9" height="8" viewBox="0 0 9 8"><rect x="0.5" y="0.5" width="8" height="7" fill="#fff" stroke="#222"/><rect x="2" y="3" width="5" height="1.5" fill="#222"/></svg>
<svg class="a" style="left:350px;top:672px;" width="9" height="11" viewBox="0 0 9 11"><path d="M0.5 0.5h5l3 3v7h-8z" fill="#f4f4f4" stroke="#555"/></svg>
<svg class="a" style="left:370px;top:676px;" width="5" height="3" viewBox="0 0 5 3"><path d="M0 0h5L2.5 3z" fill="#111"/></svg>
<div class="t" style="left:384px;top:675.50px;font-size:6.500px;color:#333;font-family:'Liberation Sans';">ABC</div>
<svg class="a" style="left:407px;top:673px;" width="12" height="9" viewBox="0 0 12 9"><rect x="0" y="1" width="9" height="6" fill="#222"/><path d="M10 2v6" stroke="#222"/></svg>
<div class="t" style="left:431px;top:674.07px;font-size:7.000px;color:#333;font-family:'Liberation Sans';">&quot;ab&quot;</div>
<div class="a" style="left:0px;top:687px;width:1280px;height:33px;background:#1f2a36"></div>
<div class="a" style="left:0px;top:687px;width:40px;height:33px;background:#1a3240"></div>
<svg class="a" style="left:12px;top:696px;" width="15" height="15" viewBox="0 0 15 15"><rect x="0" y="0.5" width="6.8" height="6.5" fill="#fff"/><rect x="8" y="0" width="7" height="7" fill="#fff"/><rect x="0" y="8" width="6.8" height="6.5" fill="#fff"/><rect x="8" y="8" width="7" height="7" fill="#fff"/></svg>
<div class="a" style="left:40px;top:687px;width:286px;height:33px;background:#f0f0f0"></div>
<svg class="a" style="left:50px;top:695px;" width="16" height="16" viewBox="0 0 16 16"><circle cx="9.5" cy="6" r="4.8" fill="none" stroke="#222" stroke-width="1.4"/><path d="M6 9.5L1 14.5" stroke="#222" stroke-width="1.6"/></svg>
<div class="t" style="left:73.75px;top:698.09px;font-size:12.301px;color:#222;font-family:'Liberation Sans';">Escribe aquí para buscar</div>
<svg class="a" style="left:338px;top:695px;" width="17" height="17" viewBox="0 0 17 17"><circle cx="8.5" cy="8.5" r="6.8" fill="none" stroke="#fff" stroke-width="1.8"/></svg>
<svg class="a" style="left:378px;top:695px;" width="17" height="16" viewBox="0 0 17 16"><rect x="1" y="3" width="12" height="10" fill="none" stroke="#fff" stroke-width="1.3"/><path d="M1 8h12M15.5 3v10" stroke="#fff" stroke-width="1.3"/><rect x="0" y="5.5" width="14" height="5" fill="#1f2a36"/><path d="M3 8h8" stroke="#fff" stroke-width="1.3"/></svg>
<svg class="a" style="left:419px;top:693px;" width="20" height="20" viewBox="0 0 20 20"><path d="M3 12c0-6 4-10 9-10 4.5 0 7 3 7 7H7c0 4 3 6 6.5 6 2 0 4-.7 5-1.5v4C17 18.7 15 19 13 19 7 19 3 16 3 12z" fill="#1e88e5"/></svg>
<div class="a" style="left:459px;top:692px;width:24px;height:22px;background:#5a9a30;border-radius:2px"></div>
<div class="a" style="left:465px;top:697px;width:12px;height:12px;border:2px solid #fff;border-right:none;background:transparent"></div>
<div class="a" style="left:452px;top:717px;width:38px;height:3px;background:#7ab0e0"></div>
<svg class="a" style="left:501px;top:695px;" width="20" height="17" viewBox="0 0 20 17"><path d="M0 2h7l2 2h11v13H0z" fill="#e8b838"/><rect x="0" y="6" width="20" height="11" fill="#f8d060"/><rect x="5" y="9" width="10" height="4" fill="#3a8ad8"/></svg>
<div class="a" style="left:492px;top:717px;width:38px;height:3px;background:#7ab0e0"></div>
<svg class="a" style="left:542px;top:692px;" width="20" height="20" viewBox="0 0 20 20"><path d="M6 6V4a4 4 0 0 1 8 0v2" fill="none" stroke="#fff" stroke-width="1.5"/><rect x="1" y="6" width="18" height="14" fill="#fff"/><rect x="6" y="9" width="3.5" height="3.5" fill="#f25022"/><rect x="10.5" y="9" width="3.5" height="3.5" fill="#7fba00"/><rect x="6" y="13.5" width="3.5" height="3.5" fill="#00a4ef"/><rect x="10.5" y="13.5" width="3.5" height="3.5" fill="#ffb900"/></svg>
<svg class="a" style="left:583px;top:696px;" width="22" height="15" viewBox="0 0 22 15"><rect x="0" y="0" width="22" height="15" fill="#2b8ee0"/><path d="M0 0l11 8 11-8" fill="#60b8f0" stroke="#1a5fa0" stroke-width="0.6"/></svg>
<svg class="a" style="left:625px;top:693px;" width="20" height="20" viewBox="0 0 20 20"><circle cx="10" cy="10" r="9.5" fill="#db4437"/><path d="M10 10L1.8 5.2A9.5 9.5 0 0 0 7 19.3z" fill="#0f9d58"/><path d="M10 10l-3 9.3A9.5 9.5 0 0 0 19.5 10z" fill="#f4b400"/><circle cx="10" cy="10" r="4.5" fill="#fff"/><circle cx="10" cy="10" r="3.5" fill="#4285f4"/></svg>
<svg class="a" style="left:666px;top:692px;" width="20" height="22" viewBox="0 0 20 22"><rect x="6" y="1" width="12" height="15" rx="2" fill="#d03880"/><rect x="8" y="4" width="8" height="2" fill="#f090c0"/><rect x="8" y="8" width="8" height="2" fill="#f090c0"/><circle cx="6" cy="15" r="5" fill="#8a8a8a"/><circle cx="6" cy="15" r="2" fill="#ddd"/></svg>
<div class="a" style="left:656px;top:717px;width:38px;height:3px;background:#7ab0e0"></div>
<div class="a" style="left:698px;top:687px;width:40px;height:33px;background:#3c4654"></div>
<div class="a" style="left:708px;top:692px;width:20px;height:21px;background:#fff"></div>
<svg class="a" style="left:711px;top:695px;" width="14" height="14" viewBox="0 0 14 14"><path d="M12 2H4v10h8" fill="none" stroke="#2a6a20" stroke-width="2.5"/></svg>
<div class="a" style="left:698px;top:717px;width:40px;height:3px;background:#7ab0e0"></div>
<svg class="a" style="left:1057px;top:698px;" width="14" height="8" viewBox="0 0 14 8"><path d="M1 7l6-6 6 6" fill="none" stroke="#fff" stroke-width="1.4"/></svg>
<svg class="a" style="left:1076px;top:695px;" width="18" height="16" viewBox="0 0 18 16"><ellipse cx="8" cy="9" rx="7" ry="5" fill="#b8c0c8"/><circle cx="14" cy="11" r="4.5" fill="#555"/><path d="M14 9v4" stroke="#fff"/></svg>
<svg class="a" style="left:1101px;top:694px;" width="10" height="18" viewBox="0 0 10 18"><rect x="2" y="0" width="6" height="11" rx="3" fill="#e0e0e0"/><path d="M0 8a5 5 0 0 0 10 0M5 13v3M2 17h6" stroke="#e0e0e0" fill="none" stroke-width="1.3"/></svg>
<div class="a" style="left:875px;top:589px;width:398px;height:17px;background:linear-gradient(#e6e6e6,#c8c8c8);border:1px solid #b8b8b8"></div>
<div class="t" style="left:879.8px;top:592.70px;font-size:9.800px;color:#333;font-family:'Liberation Sans';">Capture</div>
<div class="t" style="left:926.5px;top:592.70px;font-size:9.800px;color:#333;font-family:'Liberation Sans';">Effects</div>
<div class="t" style="left:967px;top:592.70px;font-size:9.800px;color:#333;font-family:'Liberation Sans';">Tools</div>
<div class="t" style="left:1001px;top:592.70px;font-size:9.800px;color:#333;font-family:'Liberation Sans';">Help</div>
<div class="a" style="left:1248px;top:596px;width:4px;height:1px;background:#333"></div>
<svg class="a" style="left:1262px;top:593px;" width="7" height="7" viewBox="0 0 7 7"><path d="M0.5 0.5l6 6M6.5 0.5l-6 6" stroke="#222" stroke-width="1.6"/></svg>
<div class="a" style="left:875px;top:605px;width:250px;height:70px;background:#1b1b1b"></div>
<div class="a" style="left:882px;top:610px;width:135px;height:57px;background:#202020;border:1px solid #2e2e2e;box-shadow:inset 0 0 0 2px #151515"></div>
<div class="t" style="left:934.6px;top:614.86px;font-size:8.440px;color:#e8e8e8;font-family:'Liberation Sans';">Duration</div>
<div class="a" style="left:887px;top:631px;width:128px;height:31px;background:linear-gradient(#6e6e6e,#4a4a4a 55%,#3a3a3a);border-radius:3px;border:1px solid #555"></div>
<div class="t" style="left:903.5px;top:632.37px;font-size:28.500px;color:#fff;font-family:'Liberation Sans';transform:scaleX(0.9980);transform-origin:0 0;-webkit-text-stroke:0.5px #fff">0:00:13</div>
<div class="a" style="left:1022px;top:610px;width:76px;height:57px;background:#202020;border:1px solid #2e2e2e;box-shadow:inset 0 0 0 2px #151515"></div>
<div class="t" style="left:1050.4px;top:614.85px;font-size:8.445px;color:#e8e8e8;font-family:'Liberation Sans';">Audio</div>
<svg class="a" style="left:1034px;top:634px;" width="58" height="20" viewBox="0 0 58 20"><path d="M3 2v9M27 2v9M52 2v9" stroke="#aaa" stroke-width="0.8"/><path d="M2 11.5L52 5v12H2z" fill="#d8dcdc"/><rect x="2" y="11.5" width="50" height="5.5" fill="#f0f0f0"/><rect x="2" y="11.5" width="12" height="5.5" fill="#40d040"/><path d="M48 9l4-2 4 2v9h-8z" fill="#9ad0e8" stroke="#4a90b8" stroke-width="0.6"/></svg>
<div class="a" style="left:1102px;top:610px;width:30px;height:57px;background:#202020;border:1px solid #2e2e2e"></div>
<div class="t" style="left:1112.7px;top:613.53px;font-size:10.000px;color:#e8e8e8;font-family:'Liberation Sans';">W</div>
<div class="a" style="left:1110px;top:632px;width:15px;height:28px;background:linear-gradient(90deg,#d8d8d8,#a8a8a8)"></div>
<div class="a" style="left:1120px;top:600px;width:160px;height:120px;overflow:hidden"><div class="a" style="left:0px;top:0px;width:160px;height:120px;background:linear-gradient(90deg,#b2bcbc 0%,#c0c8c8 30%,#cbd1d1 60%,#d0d6d6 100%)"></div><div class="a" style="left:0px;top:0px;width:160px;height:40px;background:linear-gradient(#c4cccc,rgba(200,208,208,0));"></div><div class="a" style="left:58px;top:32px;width:54px;height:37px;background:#dcd6cc;filter:blur(1px)"></div><div class="a" style="left:63px;top:35px;width:18px;height:12px;background:#dcc4bc;filter:blur(2px)"></div><div class="a" style="left:84px;top:37px;width:24px;height:14px;background:#d4ccb8;filter:blur(2px)"></div><div class="a" style="left:112px;top:34px;width:46px;height:43px;background:#e2e6e2;filter:blur(1px)"></div><div class="a" style="left:116px;top:40px;width:36px;height:28px;background:#c4d0b0;filter:blur(1.5px)"></div><div class="a" style="left:124px;top:45px;width:14px;height:14px;background:#a8c080;filter:blur(1.5px)"></div><div class="a" style="left:140px;top:41px;width:10px;height:12px;background:#b4b4cc;filter:blur(2px)"></div><div class="a" style="left:46px;top:100px;width:100px;height:30px;background:#c6bebe;border-radius:40% 40% 0 0;filter:blur(1.5px)"></div><div class="a" style="left:68px;top:42px;width:52px;height:64px;background:#806a5c;border-radius:48% 48% 25% 25%;filter:blur(1.5px)"></div><div class="a" style="left:73px;top:46px;width:40px;height:54px;background:#cdb0ae;border-radius:45% 45% 45% 45%;filter:blur(1.5px)"></div><div class="a" style="left:78px;top:62px;width:12px;height:6px;background:#a89090;filter:blur(2px)"></div><div class="a" style="left:96px;top:62px;width:12px;height:6px;background:#a89090;filter:blur(2px)"></div><div class="a" style="left:89px;top:68px;width:7px;height:10px;background:#dcc6c4;filter:blur(1.5px)"></div><div class="a" style="left:84px;top:82px;width:18px;height:6px;background:#a08080;filter:blur(1.5px)"></div><div class="a" style="left:60px;top:59px;width:12px;height:31px;background:#222228;border-radius:45%;filter:blur(1px)"></div><div class="a" style="left:112px;top:61px;width:12px;height:29px;background:#26262c;border-radius:45%;filter:blur(1px)"></div><svg class="a" style="left:0;top:0" width="160" height="120"><path d="M66 62C66 45 78 38 92 38S120 45 120 62" fill="none" stroke="#2a2a30" stroke-width="1.2" opacity=".45"/><path d="M65 90C66 100 68 110 70 120" fill="none" stroke="#303038" stroke-width="1.4"/></svg></div>
</body></html>
